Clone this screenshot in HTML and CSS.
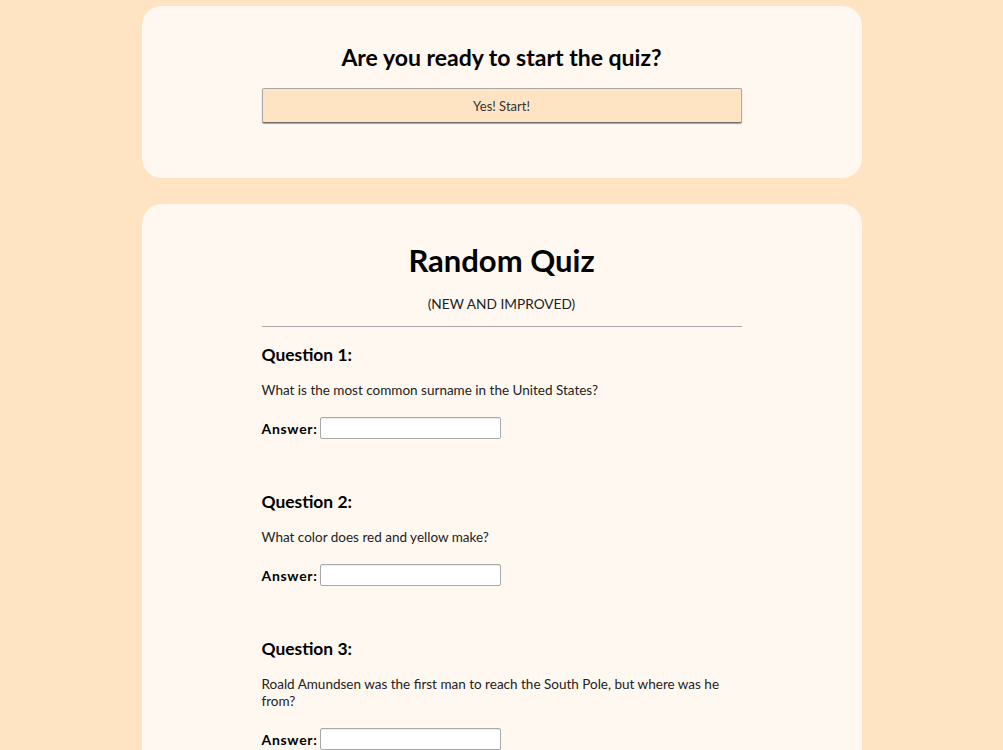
FILE: index.html
```html
<!DOCTYPE html>
<html lang="en">
<head>
<meta charset="utf-8">
<title>Random Quiz</title>
<link rel="stylesheet" href="styles.css">
</head>
<body>
<main class="page">
  <section class="card start-card">
    <h2 class="start-title">Are you ready to start the quiz?</h2>
    <button class="start-btn" type="button">Yes! Start!</button>
  </section>

  <section class="card quiz-card">
    <h1 class="quiz-title">Random Quiz</h1>
    <p class="quiz-sub">(NEW AND IMPROVED)</p>
    <hr class="quiz-rule">

    <div class="question">
      <h3 class="q-title">Question 1:</h3>
      <p class="q-text">What is the most common surname in the United States?</p>
      <label class="answer"><span class="answer-label">Answer:</span><input class="answer-input" type="text"></label>
    </div>

    <div class="question">
      <h3 class="q-title">Question 2:</h3>
      <p class="q-text">What color does red and yellow make?</p>
      <label class="answer"><span class="answer-label">Answer:</span><input class="answer-input" type="text"></label>
    </div>

    <div class="question">
      <h3 class="q-title">Question 3:</h3>
      <p class="q-text">Roald Amundsen was the first man to reach the South Pole, but where was he from?</p>
      <label class="answer"><span class="answer-label">Answer:</span><input class="answer-input" type="text"></label>
    </div>
  </section>
</main>
</body>
</html>
```

FILE: styles.css
```css
* { box-sizing: border-box; }

html, body {
  margin: 0;
  padding: 0;
  background: #ffe4c4;
}

body {
  font-family: "Lato", "Open Sans", sans-serif;
  color: #111;
}

.page {
  padding-top: 6px;
  display: flex;
  flex-direction: column;
  align-items: center;
  gap: 26px;
}

.card {
  width: 720px;
  background: #fff8f0;
  border-radius: 20px;
  display: flex;
  flex-direction: column;
  align-items: center;
}

.start-card {
  padding: 36px 0 55px;
}

.start-title {
  margin: 0;
  font-size: 23px;
  line-height: 30px;
  font-weight: 700;
  color: #000;
}

.start-btn {
  margin-top: 16px;
  width: 480px;
  height: 35px;
  background: #ffe4c4;
  border: 1px solid #a9a9a9;
  border-bottom-color: #6f6f6f;
  border-radius: 2px;
  box-shadow: 0 1px 1px rgba(0,0,0,0.35);
  font-family: inherit;
  font-size: 13px;
  color: #333;
}

.quiz-card {
  padding: 36px 120px 40px;
  align-items: stretch;
}

.quiz-title {
  margin: 0;
  text-align: center;
  font-size: 31px;
  line-height: 40px;
  font-weight: 700;
  color: #000;
}

.quiz-sub {
  margin: 15px 0 0;
  text-align: center;
  font-size: 13.7px;
  line-height: 18px;
  color: #222;
}

.quiz-rule {
  margin: 13px 0 0;
  border: 0;
  border-top: 1px solid #a8a8a8;
  height: 0;
}

.question {
  margin-top: 17px;
}

.question + .question {
  margin-top: 52px;
}

.q-title {
  margin: 0;
  font-size: 17.4px;
  line-height: 22px;
  font-weight: 700;
  color: #000;
}

.q-text {
  margin: 16px 0 0;
  font-size: 13.5px;
  line-height: 17px;
  color: #222;
}

.answer {
  margin-top: 18px;
  display: flex;
  align-items: center;
  gap: 2px;
}

.answer-label {
  font-size: 14px;
  letter-spacing: 0.7px;
  font-weight: 700;
  color: #000;
}

.answer-input {
  width: 181px;
  height: 22px;
  background: #fff;
  border: 1px solid #a9a9a9;
  border-radius: 2px;
  box-shadow: inset 0 1px 1px rgba(0,0,0,0.08);
  margin: 0;
  padding: 0 3px;
}
```
